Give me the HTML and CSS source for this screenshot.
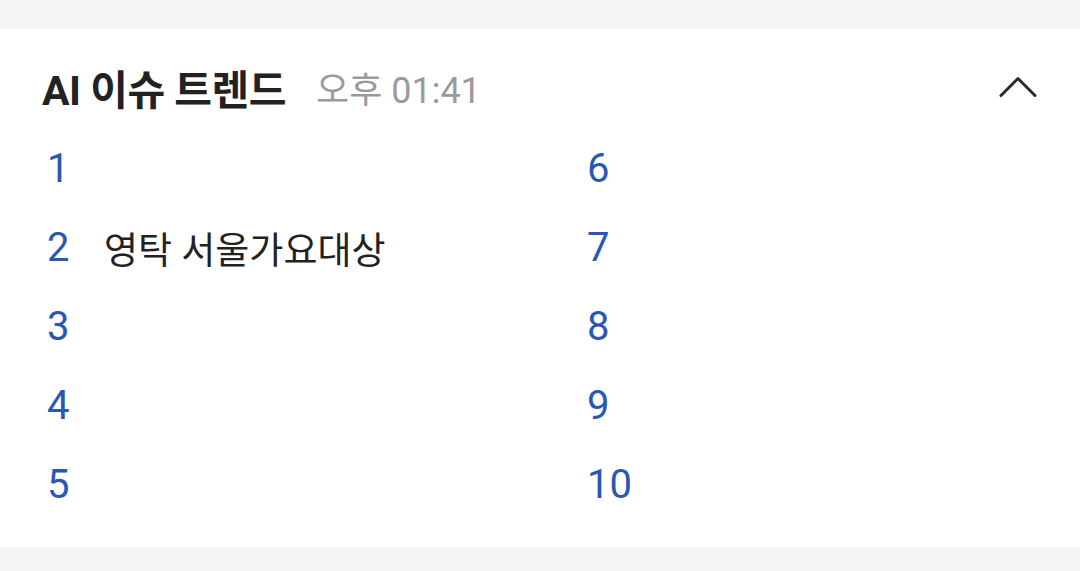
FILE: index.html
```html
<!DOCTYPE html>
<html lang="ko">
<head>
    <meta charset="UTF-8">
    <meta name="viewport" content="width=device-width, initial-scale=1.0">
    <title>AI 이슈 트렌드</title>
    <link rel="stylesheet" href="styles.css">
</head>
<body>

    <div class="gap"></div>

    <!-- Trend Card -->
    <div class="card">
        <div class="header">
            <h2 class="title">AI 이슈 트렌드</h2>
            <span class="time">오후 01:41</span>
            <button class="toggle" aria-label="접기">
                <svg width="38" height="22" viewBox="0 0 38 22">
                    <polyline points="2,19.5 19,2.5 36,19.5" fill="none" stroke="#2b2b2b" stroke-width="3" stroke-linecap="round" stroke-linejoin="round"/>
                </svg>
            </button>
        </div>

        <ol class="trend-list">
            <li class="trend-item"><span class="rank">1</span><span class="keyword"></span></li>
            <li class="trend-item"><span class="rank">6</span><span class="keyword"></span></li>
            <li class="trend-item"><span class="rank">2</span><span class="keyword">영탁 서울가요대상</span></li>
            <li class="trend-item"><span class="rank">7</span><span class="keyword"></span></li>
            <li class="trend-item"><span class="rank">3</span><span class="keyword"></span></li>
            <li class="trend-item"><span class="rank">8</span><span class="keyword"></span></li>
            <li class="trend-item"><span class="rank">4</span><span class="keyword"></span></li>
            <li class="trend-item"><span class="rank">9</span><span class="keyword"></span></li>
            <li class="trend-item"><span class="rank">5</span><span class="keyword"></span></li>
            <li class="trend-item"><span class="rank">10</span><span class="keyword"></span></li>
        </ol>
    </div>

    <div class="gap"></div>

</body>
</html>
```

FILE: styles.css
```css
body {
    font-family: Roboto, "Noto Sans CJK KR", sans-serif;
    background-color: #f4f5f7;
    margin: 0;
    padding: 0;
}
.gap {
    height: 29px;
}
.card {
    background-color: white;
    padding: 33px 43px 23px 42px;
}
.header {
    display: flex;
    align-items: center;
    height: 50px;
}
.title {
    margin: 0;
    font-size: 41px;
    font-weight: bold;
    color: #222;
    letter-spacing: -0.5px;
}
.time {
    margin-left: 30px;
    font-size: 36px;
    color: #9a9a9a;
}
.toggle {
    margin-left: auto;
    padding: 0;
    border: none;
    background: none;
    display: flex;
}
.trend-list {
    list-style: none;
    margin: 17px 0 0 0;
    padding: 0 0 0 5px;
    display: grid;
    grid-template-columns: 540px 1fr;
}
.trend-item {
    display: flex;
    align-items: center;
    height: 79px;
}
.rank {
    width: 57px;
    font-size: 40px;
    color: #2a57b4;
}
.keyword {
    font-size: 37px;
    color: #222;
}
```
